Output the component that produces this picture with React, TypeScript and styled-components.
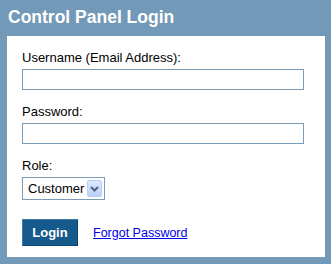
import React from "react";
import styled, { createGlobalStyle } from "styled-components";

const Global = createGlobalStyle`
  html, body { margin: 0; padding: 0; }
  body { background: #7399b8; font-family: "Liberation Sans", Arial, sans-serif; }
`;

const Page = styled.div`
  width: 331px;
  height: 264px;
  box-sizing: border-box;
  padding: 0 6px 7px 7px;
  display: flex;
  flex-direction: column;
`;

const Title = styled.h1`
  margin: 0;
  height: 36px;
  box-sizing: border-box;
  padding: 7px 0 0 1px;
  font-size: 17.5px;
  line-height: 21px;
  font-weight: bold;
  color: #ffffff;
`;

const Panel = styled.div`
  flex: 1;
  background: #ffffff;
  padding: 14px 15px 0 15px;
  display: flex;
  flex-direction: column;
`;

const Field = styled.div`
  display: flex;
  flex-direction: column;
  margin-bottom: 14px;
`;

const Label = styled.label`
  font-size: 13px;
  color: #000;
  line-height: 16px;
  margin-bottom: 3px;
`;

const TextInput = styled.input`
  width: 282px;
  height: 21px;
  box-sizing: border-box;
  border: 1px solid #7a9cb8;
  padding: 1px 3px;
  font-size: 13px;
  outline: none;
`;

const Select = styled.div`
  width: 83px;
  height: 23px;
  box-sizing: border-box;
  border: 1px solid #7a9cb8;
  display: flex;
  align-items: center;
  justify-content: space-between;
  padding: 0 2px 0 5px;
  font-size: 13px;
`;

const Arrow = styled.span`
  width: 15px;
  height: 17px;
  box-sizing: border-box;
  border: 1px solid #b9cdf5;
  background: linear-gradient(#dde8fd, #bccff8);
  border-radius: 2px;
  display: flex;
  align-items: center;
  justify-content: center;
`;

const Actions = styled.div`
  display: flex;
  align-items: center;
  gap: 15px;
  margin-top: 5px;
`;

const Button = styled.button`
  width: 56px;
  height: 27px;
  background: #165a8d;
  border: 1px solid #0e4470;
  border-top-color: #3f7aa8;
  border-left-color: #3f7aa8;
  color: #fff;
  font-family: "Liberation Sans", Arial, sans-serif;
  font-weight: bold;
  font-size: 13px;
  padding: 0;
`;

const Link = styled.a`
  color: #0000ee;
  font-size: 12.5px;
  text-decoration: underline;
`;

export default function App() {
  return (
    <Page>
      <Global />
      <Title>Control Panel Login</Title>
      <Panel>
        <Field>
          <Label>Username (Email Address):</Label>
          <TextInput type="text" />
        </Field>
        <Field>
          <Label>Password:</Label>
          <TextInput type="password" />
        </Field>
        <Field>
          <Label>Role:</Label>
          <Select>
            Customer
            <Arrow>
              <svg width="9" height="6" viewBox="0 0 9 6">
                <path d="M1 1 L4.5 4.5 L8 1" stroke="#4d6185" strokeWidth="2" fill="none" />
              </svg>
            </Arrow>
          </Select>
        </Field>
        <Actions>
          <Button>Login</Button>
          <Link href="#">Forgot Password</Link>
        </Actions>
      </Panel>
    </Page>
  );
}
